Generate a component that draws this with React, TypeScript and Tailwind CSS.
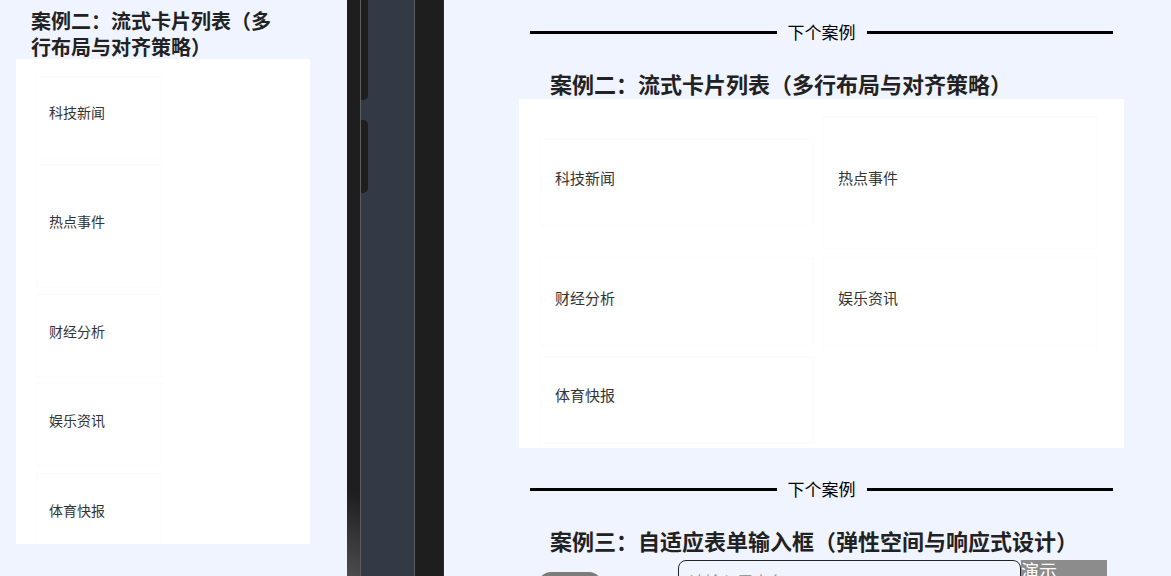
import React from "react";

const FONT = { fontFamily: '"Noto Sans CJK SC", "Noto Sans", sans-serif' };

function LeftCard({ label, h }: { label: string; h: string }) {
  return (
    <div
      className={`w-[126px] ${h} shrink-0 border border-[#fafbfc] bg-white flex flex-col justify-center pl-[12px] pb-[10px] text-[14px] leading-[20px] text-[#333]`}
    >
      {label}
    </div>
  );
}

function RightCard({ label, h }: { label: string; h: string }) {
  return (
    <div
      className={`w-[274px] ${h} shrink-0 border border-[#fafbfc] bg-white flex flex-col justify-center pl-[14px] pb-[10px] text-[15px] leading-[20px] text-[#333]`}
    >
      {label}
    </div>
  );
}

function Divider() {
  return (
    <div className="ml-[86px] w-[583px] h-[24px] flex items-center shrink-0">
      <div className="flex-1 h-[3px] bg-black" />
      <div className="px-[11px] text-[17px] leading-[24px] text-black">下个案例</div>
      <div className="flex-1 h-[3px] bg-black" />
    </div>
  );
}

export default function App() {
  return (
    <div style={FONT} className="w-[1171px] h-[576px] overflow-hidden flex bg-[#f0f4ff]">
      {/* Left phone preview */}
      <div className="w-[347px] h-full shrink-0 bg-[#f0f4ff] flex flex-col">
        <div className="ml-[31px] pt-[8px] h-[59px] text-[20px] leading-[26px] font-bold text-[#222] whitespace-nowrap shrink-0">
          案例二：流式卡片列表（多
          <br />
          行布局与对齐策略）
        </div>
        <div className="ml-[16px] w-[294px] h-[485px] bg-white overflow-hidden pt-[17px] pl-[20px] flex flex-col gap-[6px] shrink-0">
          <LeftCard label="科技新闻" h="h-[82px]" />
          <LeftCard label="热点事件" h="h-[124px]" />
          <LeftCard label="财经分析" h="h-[83px]" />
          <LeftCard label="娱乐资讯" h="h-[84px]" />
          <LeftCard label="体育快报" h="h-[84px]" />
        </div>
      </div>

      {/* Middle dark strips */}
      <div className="w-[13px] h-full shrink-0 flex flex-col bg-[#1e1e1e]">
        <div className="flex-1" />
        <div className="h-[110px] bg-[linear-gradient(200deg,#1e1e1e_25%,#4c4c4c_100%)]" />
      </div>
      <div className="w-[1px] h-full shrink-0 bg-[#5e5e5e]" />
      <div className="w-[53px] h-full shrink-0 bg-[#343a45] flex flex-col">
        <div className="w-[7px] h-[100px] bg-[#1e1e1e] rounded-br-[5px]" />
        <div className="mt-[20px] w-[7px] h-[73px] bg-[#1e1e1e] rounded-r-[5px]" />
      </div>
      <div className="w-[1px] h-full shrink-0 bg-[#5e5e5e]" />
      <div className="w-[29px] h-full shrink-0 bg-[#1e1e1e] border-r border-[#2c2c2c]" />

      {/* Right tablet preview */}
      <div className="flex-1 h-full bg-[#f0f4ff] flex flex-col pt-[20px]">
        <Divider />
        <div className="ml-[106px] mt-[26px] h-[29px] text-[22px] leading-[27px] font-bold text-[#222] whitespace-nowrap shrink-0">
          案例二：流式卡片列表（多行布局与对齐策略）
        </div>
        <div className="ml-[75px] w-[605px] h-[349px] bg-white pt-[17px] pl-[21px] flex flex-wrap items-center content-start gap-x-[9px] gap-y-[9px] shrink-0">
          <RightCard label="科技新闻" h="h-[88px]" />
          <RightCard label="热点事件" h="h-[133px]" />
          <RightCard label="财经分析" h="h-[89px]" />
          <RightCard label="娱乐资讯" h="h-[89px]" />
          <RightCard label="体育快报" h="h-[88px]" />
        </div>
        <div className="mt-[29px]">
          <Divider />
        </div>
        <div className="ml-[106px] mt-[26px] h-[29px] text-[22px] leading-[27px] font-bold text-[#222] whitespace-nowrap shrink-0">
          案例三：自适应表单输入框（弹性空间与响应式设计）
        </div>
        <div className="ml-[94px] mt-[4px] flex items-start shrink-0">
          <div className="mt-[12px] w-[64px] h-[26px] rounded-full bg-[#7c7c7c] text-[#222] text-[16px] leading-[26px] text-center">
            姓名
          </div>
          <div className="ml-[13px] mt-[12px] w-[50px] text-[15px] leading-[26px] text-[#c4c4c4]">用户名</div>
          <div className="ml-[13px] w-[343px] h-[40px] rounded-[8px] border border-[#222] bg-[#f0f4ff] pl-[10px] pt-[9px] text-[16px] leading-[22px] text-[#9a9a9a]">
            请输入用户名
          </div>
          <div className="w-[86px] h-[40px] bg-[#8c8c8c] text-white text-[18px] leading-[20px]">演示</div>
        </div>
      </div>
    </div>
  );
}
